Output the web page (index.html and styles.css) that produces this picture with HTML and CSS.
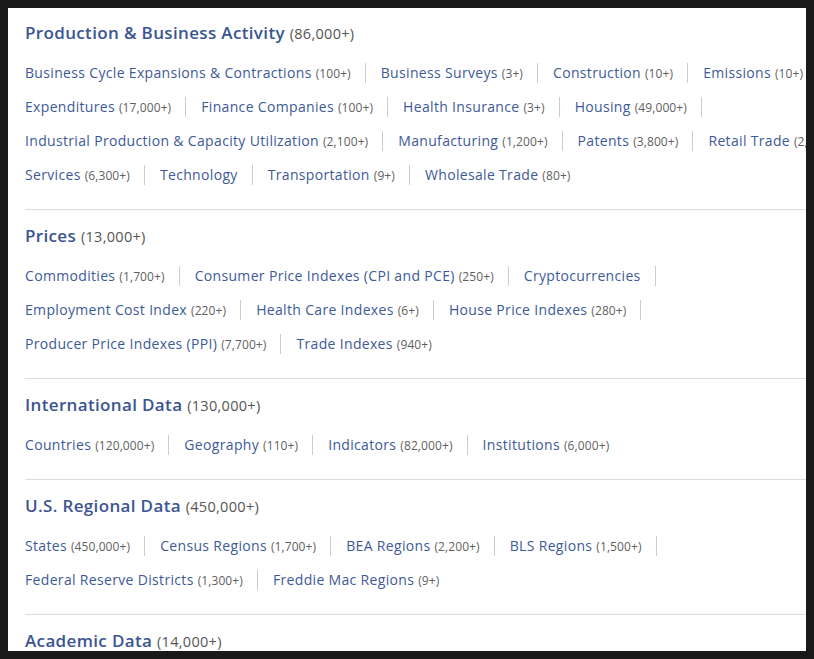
FILE: index.html
```html
<!DOCTYPE html>
<html lang="en">
<head>
<meta charset="utf-8">
<title>Categories</title>
<link rel="stylesheet" href="styles.css">
</head>
<body>
<div class="frame">
  <main class="panel">
    <section class="cat">
      <h2 class="cat-title"><a href="#">Production &amp; Business Activity</a> <span class="cat-count">(86,000+)</span></h2>
      <div class="row">
        <a class="item" href="#">Business Cycle Expansions &amp; Contractions <span class="n">(100+)</span></a>
        <a class="item" href="#">Business Surveys <span class="n">(3+)</span></a>
        <a class="item" href="#">Construction <span class="n">(10+)</span></a>
        <a class="item" href="#">Emissions <span class="n">(10+)</span></a>
      </div>
      <div class="row">
        <a class="item" href="#">Expenditures <span class="n">(17,000+)</span></a>
        <a class="item" href="#">Finance Companies <span class="n">(100+)</span></a>
        <a class="item" href="#">Health Insurance <span class="n">(3+)</span></a>
        <a class="item" href="#">Housing <span class="n">(49,000+)</span></a>
      </div>
      <div class="row">
        <a class="item" href="#">Industrial Production &amp; Capacity Utilization <span class="n">(2,100+)</span></a>
        <a class="item" href="#">Manufacturing <span class="n">(1,200+)</span></a>
        <a class="item" href="#">Patents <span class="n">(3,800+)</span></a>
        <a class="item" href="#">Retail Trade <span class="n">(2,400+)</span></a>
      </div>
      <div class="row">
        <a class="item" href="#">Services <span class="n">(6,300+)</span></a>
        <a class="item" href="#">Technology</a>
        <a class="item" href="#">Transportation <span class="n">(9+)</span></a>
        <a class="item last" href="#">Wholesale Trade <span class="n">(80+)</span></a>
      </div>
    </section>

    <section class="cat">
      <h2 class="cat-title"><a href="#">Prices</a> <span class="cat-count">(13,000+)</span></h2>
      <div class="row">
        <a class="item" href="#">Commodities <span class="n">(1,700+)</span></a>
        <a class="item" href="#">Consumer Price Indexes (CPI and PCE) <span class="n">(250+)</span></a>
        <a class="item" href="#">Cryptocurrencies</a>
      </div>
      <div class="row">
        <a class="item" href="#">Employment Cost Index <span class="n">(220+)</span></a>
        <a class="item" href="#">Health Care Indexes <span class="n">(6+)</span></a>
        <a class="item" href="#">House Price Indexes <span class="n">(280+)</span></a>
      </div>
      <div class="row">
        <a class="item" href="#">Producer Price Indexes (PPI) <span class="n">(7,700+)</span></a>
        <a class="item last" href="#">Trade Indexes <span class="n">(940+)</span></a>
      </div>
    </section>

    <section class="cat">
      <h2 class="cat-title"><a href="#">International Data</a> <span class="cat-count">(130,000+)</span></h2>
      <div class="row">
        <a class="item" href="#">Countries <span class="n">(120,000+)</span></a>
        <a class="item" href="#">Geography <span class="n">(110+)</span></a>
        <a class="item" href="#">Indicators <span class="n">(82,000+)</span></a>
        <a class="item last" href="#">Institutions <span class="n">(6,000+)</span></a>
      </div>
    </section>

    <section class="cat">
      <h2 class="cat-title"><a href="#">U.S. Regional Data</a> <span class="cat-count">(450,000+)</span></h2>
      <div class="row">
        <a class="item" href="#">States <span class="n">(450,000+)</span></a>
        <a class="item" href="#">Census Regions <span class="n">(1,700+)</span></a>
        <a class="item" href="#">BEA Regions <span class="n">(2,200+)</span></a>
        <a class="item" href="#">BLS Regions <span class="n">(1,500+)</span></a>
      </div>
      <div class="row">
        <a class="item" href="#">Federal Reserve Districts <span class="n">(1,300+)</span></a>
        <a class="item last" href="#">Freddie Mac Regions <span class="n">(9+)</span></a>
      </div>
    </section>

    <section class="cat">
      <h2 class="cat-title"><a href="#">Academic Data</a> <span class="cat-count">(14,000+)</span></h2>
    </section>
  </main>
</div>
</body>
</html>
```

FILE: styles.css
```css
html, body {
  margin: 0;
  padding: 0;
  background: #191919;
}

body {
  font-family: "Open Sans", "DejaVu Sans", sans-serif;
  width: 814px;
  height: 659px;
  overflow: hidden;
}

.frame {
  padding: 8px;
  height: 643px;
}

.panel {
  background: #ffffff;
  height: 643px;
  width: 798px;
  overflow: hidden;
  padding-left: 17px;
  box-sizing: border-box;
}

.cat {
  width: 900px;
  border-bottom: 1px solid #dcdcdc;
  padding-top: 14px;
  padding-bottom: 24px;
}

.cat:first-child {
  padding-top: 13px;
}

.cat:last-child {
  border-bottom: none;
}

.cat-title {
  margin: 0 0 18px 0;
  height: 24px;
  font-size: 17px;
  line-height: 24px;
  font-weight: 600;
  letter-spacing: 0.35px;
  white-space: nowrap;
}

.cat-title a {
  color: #3b5592;
  text-decoration: none;
}

.cat-count {
  font-size: 14.5px;
  font-weight: 400;
  letter-spacing: 0.3px;
  color: #555555;
}

.row {
  display: flex;
  height: 20px;
  white-space: nowrap;
  margin-bottom: 14px;
}

.row:last-child {
  margin-bottom: 0;
}

.item {
  display: block;
  height: 20px;
  font-size: 14px;
  line-height: 20px;
  color: #3d5a98;
  text-decoration: none;
  letter-spacing: 0.33px;
  padding-right: 14px;
  margin-right: 15px;
  border-right: 1px solid #cccccc;
}

.item.last {
  border-right: none;
}

.n {
  font-size: 12px;
  line-height: 1;
  color: #5f5f5f;
  letter-spacing: 0.1px;
}
```
